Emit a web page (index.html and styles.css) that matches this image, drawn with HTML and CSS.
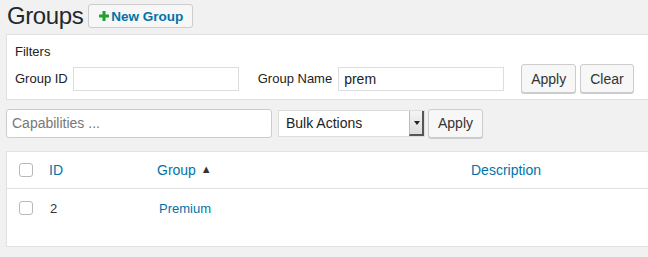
FILE: index.html
```html
<!DOCTYPE html>
<html lang="en">
<head>
  <meta charset="UTF-8" />
  <title>Groups</title>
  <link rel="stylesheet" href="styles.css">
</head>
<body>
  <div class="wrap">
    <div class="heading">
      <h1>Groups</h1>
      <a class="add-new" href="#">
        <svg class="plus" width="10" height="10" viewBox="0 0 10 10"><path d="M3.5 0h3v3.5H10v3H6.5V10h-3V6.5H0v-3h3.5z" fill="#1fa12e"/></svg>New Group
      </a>
    </div>

    <div class="filters">
      <div class="filters-title">Filters</div>
      <div class="filter-row">
        <label>Group ID</label>
        <input class="field id-field" type="text" />
        <label class="name-label">Group Name</label>
        <input class="field name-field" type="text" value="prem" />
        <button class="btn apply-btn">Apply</button>
        <button class="btn">Clear</button>
      </div>
    </div>

    <div class="bulk-row">
      <input class="field caps-field" type="text" placeholder="Capabilities ..." />
      <div class="select">
        <span>Bulk Actions</span>
        <span class="select-arrow"></span>
      </div>
      <button class="btn">Apply</button>
    </div>

    <div class="table">
      <div class="row head">
        <span class="check"></span>
        <a href="#" class="col-id">ID</a>
        <a href="#" class="col-group">Group <span class="sort">&#9650;</span></a>
        <a href="#" class="col-desc">Description</a>
      </div>
      <div class="row">
        <span class="check"></span>
        <span class="col-id num">2</span>
        <a href="#" class="col-group item">Premium</a>
        <span class="col-desc"></span>
      </div>
    </div>
  </div>
</body>
</html>
```

FILE: styles.css
```css
* { box-sizing: border-box; }
body {
  margin: 0;
  background: #f1f1f1;
  font-family: "Liberation Sans", Arial, sans-serif;
  font-size: 13px;
  color: #444;
  overflow: hidden;
}
a { text-decoration: none; color: #0073aa; }
.wrap { padding: 0 0 0 6px; }

.heading { display: flex; align-items: center; height: 34px; padding-bottom: 2px; }
h1 {
  margin: 0 5px 0 1px;
  font-size: 24px;
  font-weight: 400;
  color: #23282d;
  line-height: 30px;
  letter-spacing: -0.4px;
}
.add-new {
  display: flex; align-items: center;
  height: 24px; padding: 0 9px 0 10px;
  background: #f7f7f7;
  border: 1px solid #ccc;
  border-radius: 3px;
  font-weight: 700;
  color: #0073aa;
  font-size: 13.5px;
}
.plus { margin-right: 2px; }

.filters {
  background: #fff;
  border: 1px solid #e1e1e1;
  border-right: none;
  height: 66px;
  padding: 8px 0 0 8px;
  color: #222;
}
.filters-title { line-height: 18px; margin-bottom: 3px; }
.filter-row { display: flex; align-items: center; }
.filter-row label { margin-right: 5px; }
.field {
  height: 24px;
  border: 1px solid #ddd;
  background: #fff;
  font-family: inherit;
  font-size: 13px;
  color: #222;
  padding: 0 5px;
  outline: none;
}
.id-field { width: 166px; }
.name-label { margin-left: 19px; margin-right: 6px !important; }
.name-field { width: 166px; font-size: 14px; }
.btn {
  height: 29px;
  padding: 0 9px;
  background: #f7f7f7;
  border: 1px solid #ccc;
  border-radius: 3px;
  box-shadow: 0 1px 0 #ccc;
  font-family: inherit;
  font-size: 14px;
  color: #333;
  margin-right: 4px;
}
.apply-btn { margin-left: 17px; }

.bulk-row { display: flex; align-items: center; margin-top: 8px; height: 30px; }
.caps-field {
  width: 266px; height: 29px;
  border-radius: 3px;
  border: 1px solid #ccc;
  font-size: 14px;
}
.caps-field::placeholder { color: #777; }
.select {
  display: flex; align-items: center; justify-content: space-between;
  width: 147px; height: 27px;
  margin: 0 3px 0 6px;
  background: #fff;
  border: 1px solid #ddd;
  padding-left: 7px;
  font-size: 14px;
  color: #222;
}
.select-arrow {
  width: 15px; height: 25px;
  background: linear-gradient(#f4f4f4, #ddd);
  border-left: 1px solid #bbb;
  border-right: 2px solid #555;
  border-bottom: 2px solid #555;
  position: relative;
}
.select-arrow::after {
  content: "";
  position: absolute; left: 4px; top: 10px;
  border: 3px solid transparent;
  border-top: 4px solid #222;
}

.table {
  margin-top: 13px;
  background: #fff;
  border: 1px solid #e1e1e1;
  border-right: none;
  height: 96px;
  box-shadow: 0 1px 1px rgba(0,0,0,.04);
}
.row {
  display: grid;
  grid-template-columns: 30px 108px 314px 1fr;
  align-items: center;
  padding-left: 12px;
  height: 37px;
}
.row.head { border-bottom: 1px solid #e1e1e1; font-size: 14px; }
.check {
  width: 14px; height: 14px;
  border: 1px solid #b4b9be;
  border-radius: 3px;
  background: #fff;
}
.sort { font-size: 11px; color: #333; vertical-align: 2px; margin-left: 1px; }
.num { color: #333; padding-left: 1px; }
.item { padding-left: 2px; }
.row:not(.head) { height: 38px; }
```
